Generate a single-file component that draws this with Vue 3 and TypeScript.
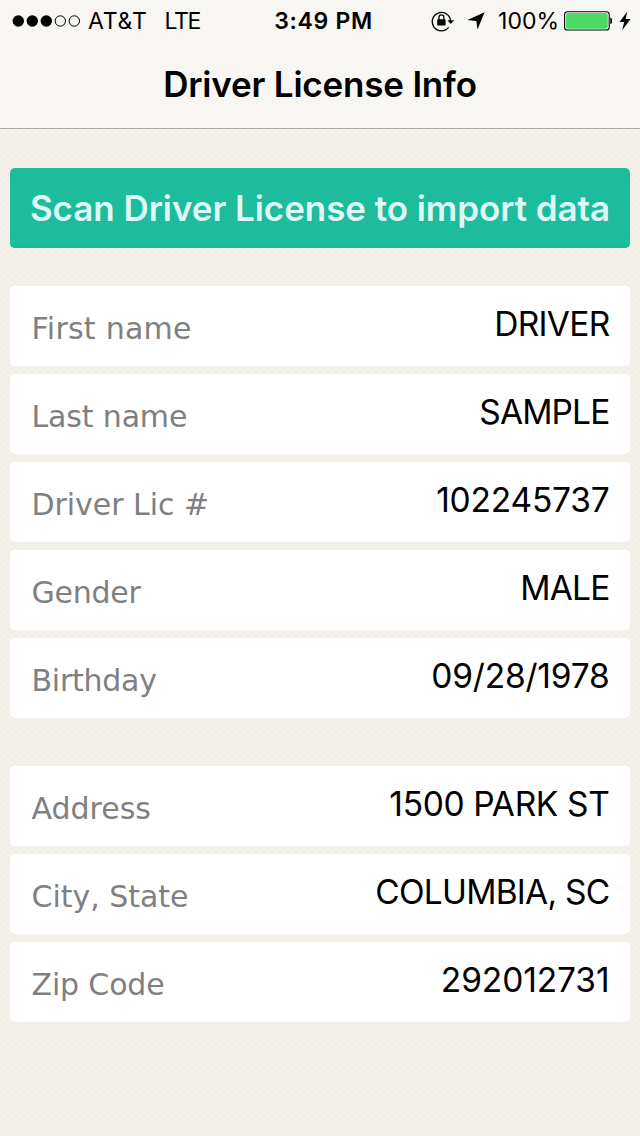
<script setup lang="ts">
interface Field {
  label: string
  value: string
  labelTracking: number
  valueTracking: number
}

const groups: Field[][] = [
  [
    { label: 'First name', value: 'DRIVER', labelTracking: 0.25, valueTracking: -0.7 },
    { label: 'Last name', value: 'SAMPLE', labelTracking: -0.15, valueTracking: -0.85 },
    { label: 'Driver Lic #', value: '102245737', labelTracking: -0.05, valueTracking: -0.2 },
    { label: 'Gender', value: 'MALE', labelTracking: -0.25, valueTracking: -0.8 },
    { label: 'Birthday', value: '09/28/1978', labelTracking: -0.25, valueTracking: -0.2 },
  ],
  [
    { label: 'Address', value: '1500 PARK ST', labelTracking: 0, valueTracking: -0.35 },
    { label: 'City, State', value: 'COLUMBIA, SC', labelTracking: -0.03, valueTracking: -0.75 },
    { label: 'Zip Code', value: '292012731', labelTracking: -0.15, valueTracking: -0.1 },
  ],
]
</script>

<template>
  <div class="screen">
    <header class="header">
      <div class="status">
        <div class="side">
          <svg class="signal" width="70" height="14" viewBox="0 0 70 14">
            <circle cx="6.3" cy="7" r="5.7" />
            <circle cx="20.3" cy="7" r="5.7" />
            <circle cx="34.3" cy="7" r="5.7" />
            <circle class="hollow" cx="48.3" cy="7" r="5.2" />
            <circle class="hollow" cx="62.3" cy="7" r="5.2" />
          </svg>
          <span class="carrier">AT&amp;T</span>
          <span class="network">LTE</span>
        </div>
        <span class="time">3:49 PM</span>
        <div class="side right">
          <svg class="lock" width="24" height="22" viewBox="0 0 24 22">
            <path d="M17.6 17.4A9.2 9.2 0 1 1 19.6 10.6" fill="none" stroke="#000" stroke-width="1.3" />
            <path d="M16.4 10.3H23.2L19.8 14.1Z" />
            <rect x="6.2" y="9.2" width="8.4" height="6.2" rx=".6" />
            <path d="M8 9.7V7.2a2.4 2.4 0 0 1 4.8 0V9.7" fill="none" stroke="#000" stroke-width="1.3" />
          </svg>
          <svg class="arrow" width="18" height="18" viewBox="0 0 18 18">
            <path d="M17.6.3 10.5 17.5 9.3 8.9.4 8Z" />
          </svg>
          <span class="percent">100%</span>
          <svg class="battery" width="48" height="20" viewBox="0 0 48 20">
            <rect x=".6" y=".8" width="44.6" height="18.2" rx="2.8" fill="#fff" stroke="#000" stroke-width="1.1" />
            <rect x="2" y="2.1" width="41.8" height="15.6" rx="1.6" fill="#4cd964" />
            <path d="M46.3 6.6c1.3.4 2 1.6 2 3.3s-.7 2.9-2 3.3Z" />
          </svg>
          <svg class="bolt" width="12" height="20" viewBox="0 0 12 20">
            <path d="M8.3.5.6 11h4.6L3.2 19.2 11.5 8H6.6Z" />
          </svg>
        </div>
      </div>
      <h1 class="title">Driver License Info</h1>
    </header>

    <main class="content">
      <button class="scan" type="button">Scan Driver License to import data</button>
      <section v-for="(group, i) in groups" :key="i" class="group">
        <div v-for="field in group" :key="field.label" class="row">
          <span class="label" :style="{ letterSpacing: `${field.labelTracking}px` }">{{ field.label }}</span>
          <span class="value" :style="{ letterSpacing: `${field.valueTracking}px` }">{{ field.value }}</span>
        </div>
      </section>
    </main>
  </div>
</template>

<style>
body {
  margin: 0;
}
</style>

<style scoped>
.screen {
  box-sizing: border-box;
  width: 640px;
  height: 1136px;
  overflow: hidden;
  background-color: #f4f1ea;
  background-image:
    radial-gradient(circle, rgba(120, 118, 105, 0.06) 0.6px, transparent 1.6px),
    radial-gradient(circle, rgba(120, 118, 105, 0.06) 0.6px, transparent 1.6px);
  background-size: 8px 6px;
  background-position: 0 0, 4px 3px;
  font-family: Inter, "Liberation Sans", sans-serif;
  color: #000;
}

.header {
  box-sizing: border-box;
  height: 129px;
  background: #f7f6f2;
  border-bottom: 1px solid #aaa8a2;
}

.status {
  display: grid;
  grid-template-columns: 1fr auto 1fr;
  align-items: center;
  height: 41px;
  padding: 0 9px 0 12px;
  font-size: 23px;
  line-height: 41px;
  white-space: nowrap;
}

.status span {
  padding-top: 2px;
  line-height: 39px;
}

.side {
  display: flex;
  align-items: center;
  width: 0;
  min-width: 100%;
  height: 41px;
}

.right {
  justify-content: flex-end;
}

.status svg {
  flex: none;
}

.hollow {
  fill: none;
  stroke: #000;
  stroke-width: 1;
}

.carrier {
  margin-left: 6px;
  letter-spacing: 0.8px;
}

.network {
  margin-left: 17px;
  letter-spacing: -1.4px;
}

.time {
  font-weight: 600;
  letter-spacing: 0.7px;
  margin-left: 4px;
}

.arrow {
  margin-left: 12px;
}

.percent {
  margin: 0 5px 0 13px;
}

.bolt {
  margin-left: 7px;
}

.title {
  margin: 0;
  height: 87px;
  font-size: 35px;
  font-weight: 600;
  line-height: 87px;
  text-align: center;
  letter-spacing: -0.2px;
  white-space: nowrap;
}

.content {
  padding: 39px 10px 0;
}

.scan {
  display: block;
  box-sizing: border-box;
  width: 100%;
  height: 80px;
  padding: 0;
  border: 0;
  border-radius: 5px;
  background: #1dbc9c;
  box-shadow: inset 0 -2px 0 #1bb999;
  color: #def8f6;
  font: 600 35px/80px Inter, "Liberation Sans", sans-serif;
  letter-spacing: -0.06px;
  text-align: center;
  white-space: nowrap;
}

.group {
  display: flex;
  flex-direction: column;
  gap: 8px;
  margin-top: 38px;
}

.group + .group {
  margin-top: 48px;
}

.row {
  display: flex;
  justify-content: space-between;
  box-sizing: border-box;
  height: 80px;
  padding: 0 20.5px 0 21.5px;
  border-radius: 5px;
  background: #fff;
  white-space: nowrap;
}

.label {
  color: #808080;
  font-family: "DejaVu Sans", sans-serif;
  font-size: 30px;
  line-height: 86px;
}

.value {
  font-size: 33.5px;
  line-height: 77px;
}
</style>
